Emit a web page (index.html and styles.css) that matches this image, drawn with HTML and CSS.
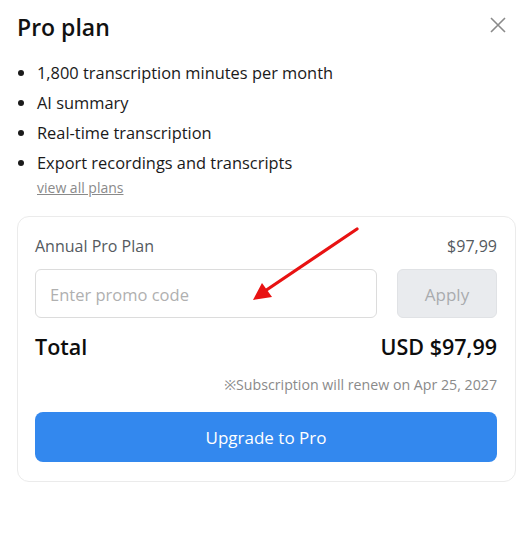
FILE: index.html
```html
<!DOCTYPE html>
<html>
<head>
<meta charset="utf-8">
<link rel="stylesheet" href="styles.css">
</head>
<body>
<div class="dialog">
  <div class="header">
    <h1 class="title">Pro plan</h1>
    <button class="close" aria-label="Close">
      <svg width="16" height="16" viewBox="0 0 16 16"><path d="M1 1L15 15M15 1L1 15" stroke="#8a8a8a" stroke-width="1.6" fill="none"/></svg>
    </button>
  </div>
  <ul class="features">
    <li>1,800 transcription minutes per month</li>
    <li>AI summary</li>
    <li>Real-time transcription</li>
    <li>Export recordings and transcripts</li>
  </ul>
  <a class="plans-link" href="#">view all plans</a>
  <div class="card">
    <div class="row plan-row">
      <span>Annual Pro Plan</span>
      <span>$97,99</span>
    </div>
    <div class="promo">
      <input class="promo-input" type="text" placeholder="Enter promo code">
      <button class="apply">Apply</button>
    </div>
    <div class="row total-row">
      <span>Total</span>
      <span>USD $97,99</span>
    </div>
    <div class="renew">※Subscription will renew on Apr 25, 2027</div>
    <button class="upgrade">Upgrade to Pro</button>
  </div>
  <svg class="arrow" width="120" height="80" viewBox="0 0 120 80">
    <line x1="117" y1="4" x2="22" y2="68" stroke="#e81212" stroke-width="3.2" stroke-linecap="round"/>
    <polygon points="13,75 22,58 32,72" fill="#e81212"/>
  </svg>
</div>
</body>
</html>
```
FILE: styles.css
```css
* { box-sizing: border-box; }
html, body { margin: 0; padding: 0; background: #fff; }
body { font-family: "Open Sans", "Noto Sans", sans-serif; color: #111; }
.dialog { position: relative; padding: 12px 9px 0 17px; width: 525px; }
.header { display: flex; justify-content: space-between; align-items: center; height: 30px; }
.title { margin: 0; font-size: 23px; line-height: 30px; font-weight: 600; color: #111; }
.close { border: 0; background: none; padding: 0; width: 16px; height: 16px; margin-right: 10px; margin-top: -4px; display: flex; }
.features { margin: 16px 0 0 0; padding: 0 0 0 20px; list-style: disc; }
.features li { font-size: 16.4px; line-height: 30px; color: #1a1a1a; }
.plans-link { display: block; margin-left: 20px; font-size: 14px; line-height: 20px; color: #8a8a8a; text-decoration: underline; }
.card { margin-top: 18px; width: 499px; border: 1px solid #ebebeb; border-radius: 12px; padding: 17px 18px 19px 17px; }
.row { display: flex; justify-content: space-between; align-items: center; }
.plan-row { font-size: 16px; line-height: 24px; color: #555a60; }
.promo { display: flex; gap: 20px; margin-top: 11px; }
.promo-input { flex: 1; height: 49px; border: 1px solid #dcdcdc; border-radius: 6px; padding: 2px 14px 0; font-family: inherit; font-size: 16.5px; color: #333; outline: none; }
.promo-input::placeholder { color: #b0b0b0; }
.apply { width: 100px; height: 49px; border: 1px solid #e0e2e5; background: #e9ebee; border-radius: 6px; padding-top: 2px; font-family: inherit; font-size: 17px; color: #a9abae; }
.total-row { margin-top: 14px; font-size: 21.5px; line-height: 30px; font-weight: 600; color: #0d0d0d; }
.renew { margin-top: 12px; text-align: right; font-size: 14.2px; line-height: 22px; color: #8a8a8a; }
.upgrade { display: block; width: 100%; margin-top: 16px; height: 50px; border: 0; border-radius: 8px; background: #3388ee; color: #fff; font-family: inherit; font-size: 17px; }
.arrow { position: absolute; left: 240px; top: 225px; }
```
